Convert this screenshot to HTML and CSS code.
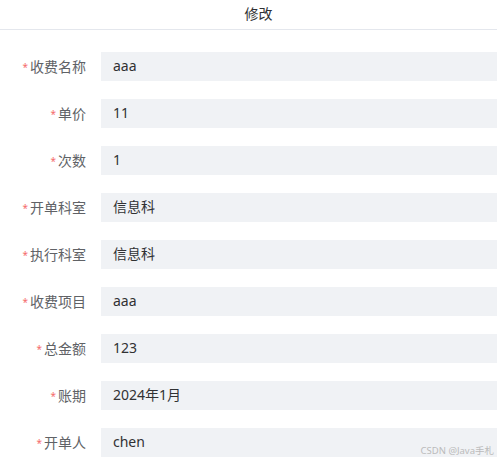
FILE: index.html
```html
<!DOCTYPE html>
<html lang="zh">
<head>
<meta charset="utf-8">
<link rel="stylesheet" href="styles.css">
</head>
<body>
<div class="dialog">
  <div class="header">修改</div>
  <form class="form">
    <div class="row"><label class="label"><span class="req">*</span>收费名称</label><div class="input">aaa</div></div>
    <div class="row"><label class="label"><span class="req">*</span>单价</label><div class="input">11</div></div>
    <div class="row"><label class="label"><span class="req">*</span>次数</label><div class="input">1</div></div>
    <div class="row"><label class="label"><span class="req">*</span>开单科室</label><div class="input">信息科</div></div>
    <div class="row"><label class="label"><span class="req">*</span>执行科室</label><div class="input">信息科</div></div>
    <div class="row"><label class="label"><span class="req">*</span>收费项目</label><div class="input">aaa</div></div>
    <div class="row"><label class="label"><span class="req">*</span>总金额</label><div class="input">123</div></div>
    <div class="row"><label class="label"><span class="req">*</span>账期</label><div class="input">2024年1月</div></div>
    <div class="row"><label class="label"><span class="req">*</span>开单人</label><div class="input">chen</div></div>
  </form>
  <div class="watermark">CSDN @Java手札</div>
</div>
</body>
</html>
```
FILE: styles.css
```css
html, body {
  margin: 0;
  padding: 0;
  background: #fff;
}
body {
  font-family: "Noto Sans", "Noto Sans CJK SC", sans-serif;
  font-size: 14px;
  color: #303133;
  overflow: hidden;
}
.dialog {
  position: relative;
  width: 497px;
  height: 462px;
}
.header {
  height: 29px;
  line-height: 28px;
  text-align: center;
  font-size: 14px;
  color: #303133;
  padding-left: 20px;
  border-bottom: 1px solid #e4e7ed;
}
.form {
  display: flex;
  flex-direction: column;
  gap: 18px;
  padding-top: 22px;
  margin: 0;
}
.row {
  display: flex;
  align-items: center;
  height: 29px;
}
.label {
  width: 101px;
  box-sizing: border-box;
  padding-right: 15px;
  text-align: right;
  color: #606266;
  font-size: 14px;
  line-height: 28px;
}
.req {
  color: #f56c6c;
  margin-right: 2px;
  font-size: 10px;
  vertical-align: 1px;
}
.input {
  flex: 1;
  height: 29px;
  line-height: 28px;
  background: #f0f2f5;
  padding-left: 12px;
  color: #303133;
}
.watermark {
  position: absolute;
  right: 3px;
  bottom: 5px;
  font-size: 9.5px;
  color: #bbbbbb;
}
```
